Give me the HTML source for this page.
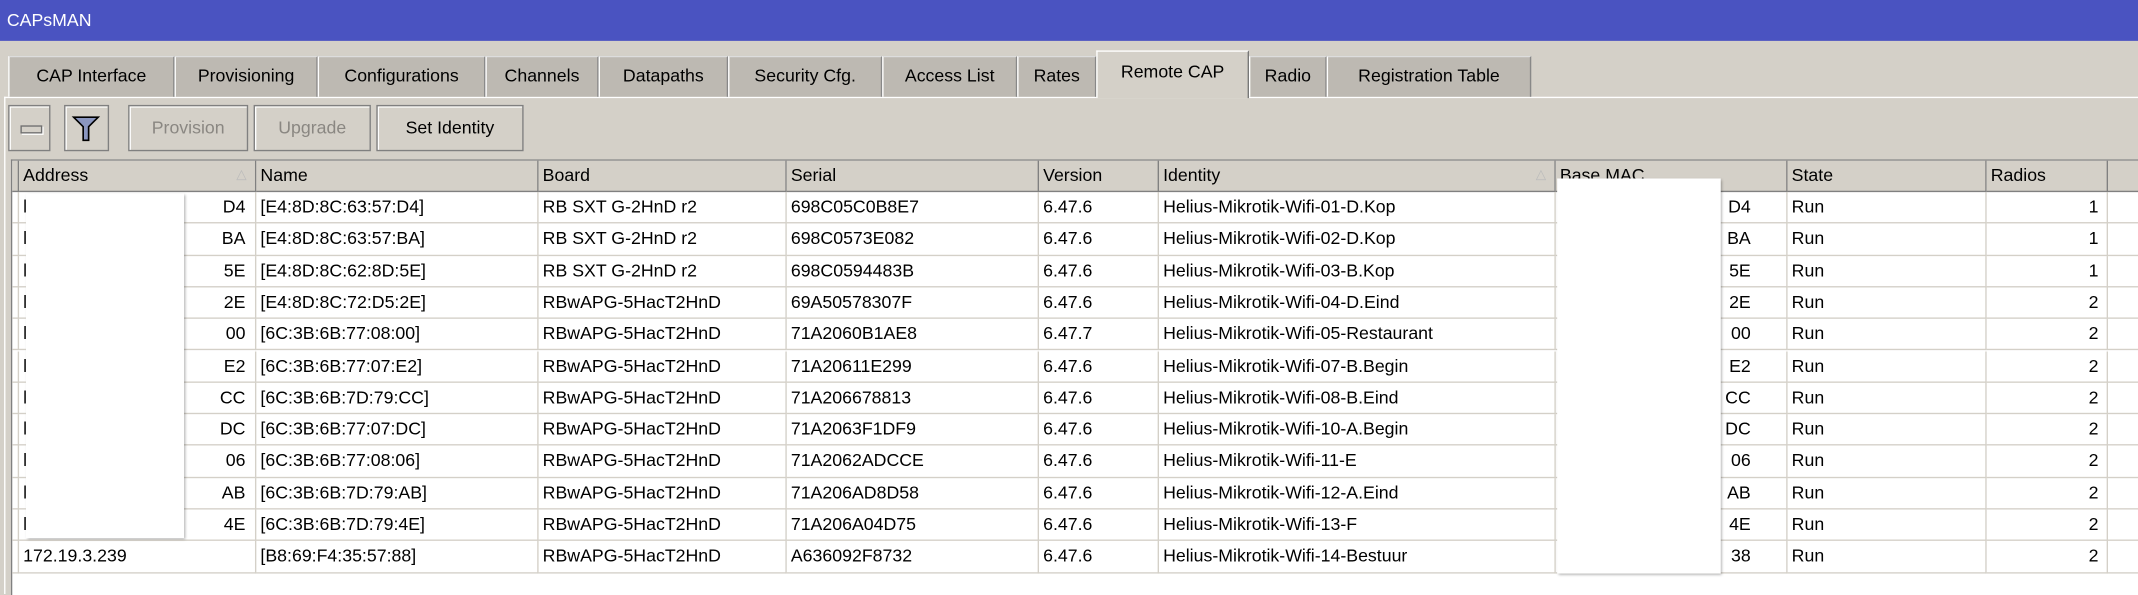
<!DOCTYPE html>
<html><head><meta charset="utf-8"><style>
html,body{margin:0;padding:0;width:2138px;height:594px;overflow:hidden;background:#d4d0c8}
#w{position:absolute;left:0;top:0;width:1568px;height:436px;transform:scale(1.36352,1.3624);transform-origin:0 0;font-family:"Liberation Sans",sans-serif;font-size:13px;color:#000;background:#d4d0c8}
.a{position:absolute;white-space:nowrap}
#title{left:0;top:0;width:1568px;height:30px;background:#4a53c1;color:#fff;line-height:30px;padding-left:5px;box-sizing:border-box}
.tab{position:absolute;top:41px;height:30px;background:#bdb9b2;border-left:1px solid #fff;border-top:1px solid #ddd;border-right:1px solid #888;box-sizing:border-box;line-height:28px;text-align:center}
.tab.act{top:37px;height:35px;background:#d4d0c8;border-left:1px solid #fff;border-top:1px solid #fff;border-right:1px solid #777;line-height:30px;z-index:2}
.btn{position:absolute;top:77px;height:34px;border:1px solid #808080;box-shadow:inset 1px 1px 0 #fff;box-sizing:border-box;line-height:32px;text-align:center;background:#d4d0c8}
.dis{color:#8a8782}
#tbl{left:8px;top:117px;width:1560px;height:319px;background:#fff;border-left:1px solid #808080;border-top:1px solid #808080}
.hd{position:absolute;top:0;height:23px;background:#d4d0c8;border-right:1px solid #808080;border-bottom:1px solid #808080;box-sizing:border-box;line-height:22px;padding-left:3px}
.c{position:absolute;height:23.3px;border-right:1px solid #d4d0c8;border-bottom:1px solid #d4d0c8;box-sizing:border-box;line-height:22px;padding-left:3px;overflow:hidden}
.r{text-align:right;padding-right:6px}
.red{position:absolute;background:#fff;box-shadow:1px 1px 2px rgba(0,0,0,.35)}
</style></head><body><div id="w">
<div class="a" id="title">CAPsMAN</div>
<div style="position:absolute;left:3px;top:71px;width:1565px;height:1px;background:#fff"></div>
<div style="position:absolute;left:3px;top:71px;width:1px;height:365px;background:#fff"></div>
<div class="tab" style="left:6px;width:122px">CAP Interface</div>
<div class="tab" style="left:128px;width:105px">Provisioning</div>
<div class="tab" style="left:233px;width:123px">Configurations</div>
<div class="tab" style="left:356px;width:83px">Channels</div>
<div class="tab" style="left:439px;width:95px">Datapaths</div>
<div class="tab" style="left:534px;width:113px">Security Cfg.</div>
<div class="tab" style="left:647px;width:99px">Access List</div>
<div class="tab" style="left:746px;width:58px">Rates</div>
<div class="tab act" style="left:804px;width:112px">Remote CAP</div>
<div class="tab" style="left:916px;width:57px">Radio</div>
<div class="tab" style="left:973px;width:150px">Registration Table</div>
<div class="btn" style="left:6px;width:31px"><div style="position:absolute;left:8px;top:14px;width:14px;height:4px;border:1px solid #707070;background:#d4d0c8;box-shadow:1px 1px 0 #fff"></div></div>
<div class="btn" style="left:47px;width:33px"><svg width="31" height="32" style="position:absolute;left:0;top:0"><path d="M6 8 L24 8 L17 15 L17 25 L13 25 L13 15 Z" fill="#8b97c0" stroke="#000" stroke-width="1.2"/></svg></div>
<div class="btn dis" style="left:94px;width:88px">Provision</div>
<div class="btn dis" style="left:186px;width:86px">Upgrade</div>
<div class="btn" style="left:276px;width:108px">Set Identity</div>
<div class="a" id="tbl">
<div class="hd" style="left:0;width:5px;padding:0"></div>
<div class="hd" style="left:5px;width:174px">Address<span style="position:absolute;right:6px;color:#bbb;font-size:10px">△</span></div>
<div class="hd" style="left:179px;width:207px">Name</div>
<div class="hd" style="left:386px;width:182px">Board</div>
<div class="hd" style="left:568px;width:185px">Serial</div>
<div class="hd" style="left:753px;width:88px">Version</div>
<div class="hd" style="left:841px;width:291px">Identity<span style="position:absolute;right:6px;color:#bbb;font-size:10px">△</span></div>
<div class="hd" style="left:1132px;width:170px">Base MAC</div>
<div class="hd" style="left:1302px;width:146px">State</div>
<div class="hd" style="left:1448px;width:89px">Radios</div>
<div class="hd" style="left:1537px;width:23px"></div>
<div id="rows"></div>
</div>
<script>
var d=[["D4","[E4:8D:8C:63:57:D4]","RB SXT G-2HnD r2","698C05C0B8E7","6.47.6","Helius-Mikrotik-Wifi-01-D.Kop","D4","1"],
["BA","[E4:8D:8C:63:57:BA]","RB SXT G-2HnD r2","698C0573E082","6.47.6","Helius-Mikrotik-Wifi-02-D.Kop","BA","1"],
["5E","[E4:8D:8C:62:8D:5E]","RB SXT G-2HnD r2","698C0594483B","6.47.6","Helius-Mikrotik-Wifi-03-B.Kop","5E","1"],
["2E","[E4:8D:8C:72:D5:2E]","RBwAPG-5HacT2HnD","69A50578307F","6.47.6","Helius-Mikrotik-Wifi-04-D.Eind","2E","2"],
["00","[6C:3B:6B:77:08:00]","RBwAPG-5HacT2HnD","71A2060B1AE8","6.47.7","Helius-Mikrotik-Wifi-05-Restaurant","00","2"],
["E2","[6C:3B:6B:77:07:E2]","RBwAPG-5HacT2HnD","71A20611E299","6.47.6","Helius-Mikrotik-Wifi-07-B.Begin","E2","2"],
["CC","[6C:3B:6B:7D:79:CC]","RBwAPG-5HacT2HnD","71A206678813","6.47.6","Helius-Mikrotik-Wifi-08-B.Eind","CC","2"],
["DC","[6C:3B:6B:77:07:DC]","RBwAPG-5HacT2HnD","71A2063F1DF9","6.47.6","Helius-Mikrotik-Wifi-10-A.Begin","DC","2"],
["06","[6C:3B:6B:77:08:06]","RBwAPG-5HacT2HnD","71A2062ADCCE","6.47.6","Helius-Mikrotik-Wifi-11-E","06","2"],
["AB","[6C:3B:6B:7D:79:AB]","RBwAPG-5HacT2HnD","71A206AD8D58","6.47.6","Helius-Mikrotik-Wifi-12-A.Eind","AB","2"],
["4E","[6C:3B:6B:7D:79:4E]","RBwAPG-5HacT2HnD","71A206A04D75","6.47.6","Helius-Mikrotik-Wifi-13-F","4E","2"],
["172.19.3.239","[B8:69:F4:35:57:88]","RBwAPG-5HacT2HnD","A636092F8732","6.47.6","Helius-Mikrotik-Wifi-14-Bestuur","38","2"]];
var L=[[5,174],[179,207],[386,182],[568,185],[753,88],[841,291],[1132,170],[1302,146],[1448,89],[1537,23]];
var h="";
for(var i=0;i<d.length;i++){var t=23+i*23.3;var r=d[i];
h+='<div class="c" style="left:0;top:'+t+'px;width:5px;padding:0"></div>';
var vals=[r[0],r[1],r[2],r[3],r[4],r[5],r[6],"Run",r[7],""];
for(var j=0;j<10;j++){var v=vals[j];var cls="c";var st="";
if(j==0&&i<11){st="text-align:right;padding-right:7px";v='<span style="position:absolute;left:3px">l</span>'+v;}
if(j==6){st="text-align:right;padding-right:26px";}
if(j==8)cls+=" r";
h+='<div class="'+cls+'" style="left:'+L[j][0]+'px;top:'+t+'px;width:'+L[j][1]+'px;'+st+'">'+v+'</div>';}}
document.getElementById("rows").innerHTML=h;
</script>
<div class="red" style="left:19px;top:142px;width:116px;height:253px"></div>
<div class="red" style="left:1142px;top:131px;width:120px;height:290px"></div>
</div></body></html>
